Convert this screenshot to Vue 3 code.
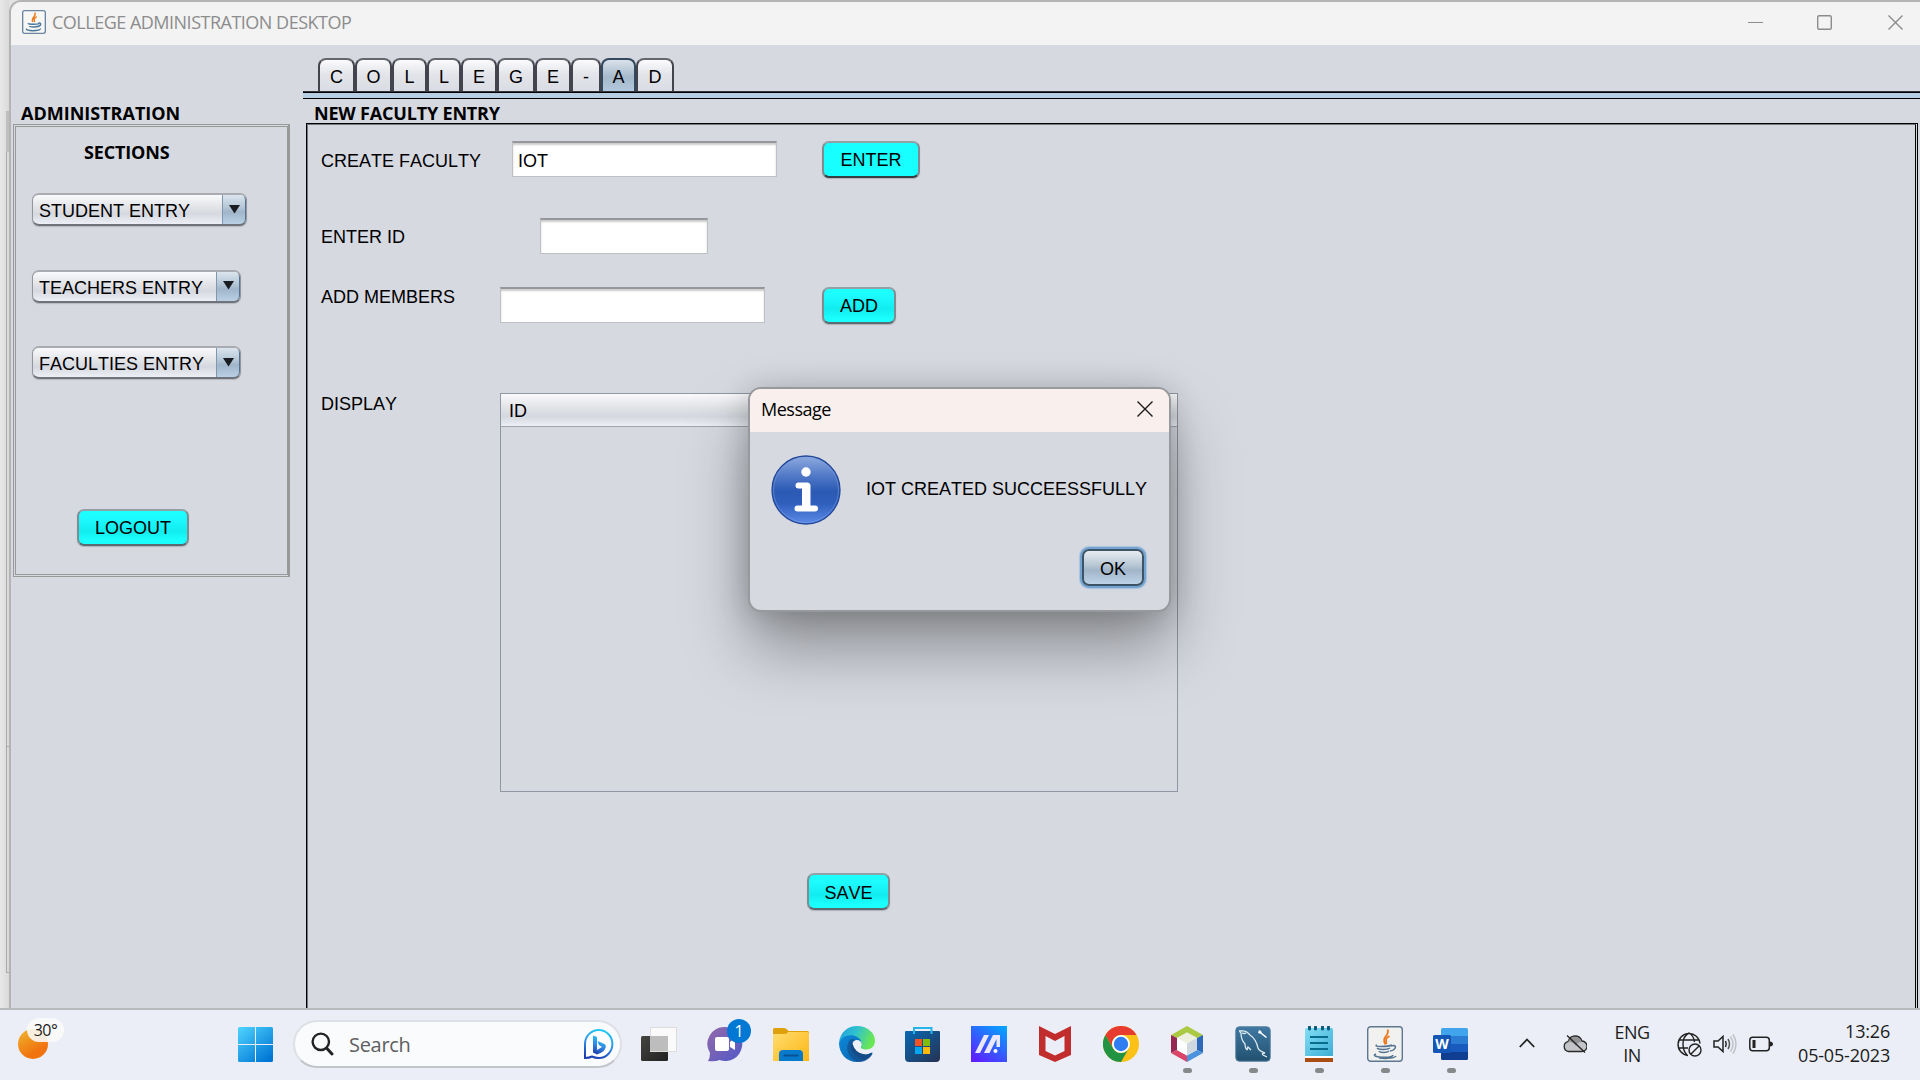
<script setup>
const tabs = [
  { text: 'C', w: 37 }, { text: 'O', w: 37 }, { text: 'L', w: 35 }, { text: 'L', w: 34 },
  { text: 'E', w: 36 }, { text: 'G', w: 38 }, { text: 'E', w: 36 }, { text: '-', w: 30 },
  { text: 'A', w: 35, on: true }, { text: 'D', w: 38 },
]
const combos = [
  { text: 'STUDENT ENTRY', w: 215 },
  { text: 'TEACHERS ENTRY', w: 209 },
  { text: 'FACULTIES ENTRY', w: 209 },
]
</script>

<template>
  <div class="screen">
    <div class="work">
      <div class="behind"><div class="b1"></div><div class="b2"></div><div class="b3"></div></div>
      <section class="window">
        <header class="titlebar">
          <svg class="java" viewBox="0 0 36 36"><rect x="1" y="1" width="34" height="34" rx="3" fill="#f7f7f6" stroke="#6a86a0" stroke-width="2" /><path d="M19 4c4 5-6 7-3 14M22 10c-5 3-4 5-3 8" fill="none" stroke="#ee7d1b" stroke-width="2.2" /><path d="M9 20c0 2 17 2 17-.5M24 20c6-2 5 4-1 5M11 24c1 2 11 2 13 0M7 28c-3 4 20 4 21 0" fill="none" stroke="#4b7798" stroke-width="2.2" /></svg>
          <span class="wintitle">COLLEGE ADMINISTRATION DESKTOP</span>
          <div class="controls">
            <svg width="156" height="18" viewBox="0 0 156 18" fill="none" stroke="#8b8b8b"><path d="M0 8.5h15" stroke-width="1.2" /><rect x="69.7" y="1.7" width="13.6" height="13.6" rx="1.5" stroke-width="1.4" /><path d="M140.500 1.500l14 14m0-14l-14 14" stroke-width="1.4" /></svg>
          </div>
        </header>
        <div class="content">
          <aside class="side">
            <h2 class="heading admin">ADMINISTRATION</h2>
            <div class="sections">
              <div class="inner">
                <h3 class="heading sec">SECTIONS</h3>
                <div v-for="c in combos" :key="c.text" class="combo" :style="{ width: c.w + 'px' }">
                  <span>{{ c.text }}</span>
                  <div class="arrow"><svg width="11" height="9" viewBox="0 0 11 9"><path d="M0 0h11L5.500 8.500z" fill="#191c20" /></svg></div>
                </div>
                <button class="btn logout">LOGOUT</button>
              </div>
            </div>
          </aside>
          <main class="main">
            <nav class="tabs">
              <div v-for="(t, i) in tabs" :key="i" class="tab" :class="{ on: t.on }" :style="{ width: t.w + 'px' }">{{ t.text }}</div>
            </nav>
            <div class="band"></div>
            <h2 class="heading entry">NEW FACULTY ENTRY</h2>
            <div class="form">
              <div class="formin">
                <div class="row r1"><label>CREATE FACULTY</label><div class="field">IOT</div><button class="btn enter">ENTER</button></div>
                <div class="row r2"><label>ENTER ID</label><div class="field short"></div></div>
                <div class="row r3"><label>ADD MEMBERS</label><div class="field"></div><button class="btn add">ADD</button></div>
                <div class="row r4"><label>DISPLAY</label><div class="table"><div class="thead">ID</div></div></div>
                <button class="btn save">SAVE</button>
              </div>
              <div class="rim"></div>
            </div>
          </main>
        </div>
      </section>
    </div>

    <footer class="taskbar">
      <div class="weather">
        <div class="sun"></div><div class="temp">30°</div>
      </div>
      <svg class="start" viewBox="0 0 35 35"><defs><linearGradient id="wl" gradientUnits="userSpaceOnUse" x1="0" y1="0" x2="28" y2="35"><stop offset="0" stop-color="#4fd5ff" /><stop offset="1" stop-color="#0076d4" /></linearGradient></defs><path fill="url(#wl)" d="M1.500 0H17v17H0V1.500Q0 0 1.500 0zM18 0h15.500Q35 0 35 1.500V17H18zM0 18h17v17H1.500Q0 35 0 33.500zM18 18h17v15.500q0 1.500-1.500 1.500H18z" /></svg>
      <div class="search">
        <svg width="23" height="24" viewBox="0 0 23 24" fill="none" stroke="#222"><circle cx="9.800" cy="9.800" r="8.200" stroke-width="2.400" /><path d="M15.500 16l5.500 6" stroke-width="3" stroke-linecap="round" /></svg>
        <span>Search</span>
        <svg class="bing" width="31" height="32" viewBox="0 0 31 32"><defs><linearGradient id="bg" x1="0.600" y1="0" x2="0.300" y2="1"><stop offset="0" stop-color="#22c9f2" /><stop offset=".5" stop-color="#318fe9" /><stop offset="1" stop-color="#1d3fae" /></linearGradient></defs><path d="M2 30V16A13.700 14 0 1 1 16 30Q12 30 9 28.500Q6 30 2 30z" fill="#fff" stroke="url(#bg)" stroke-width="2" /><path d="M10 7.500l4 1.500v13l5-3-3-2-1.500-4 7 3q2 1 1 4-1 3-4 4.500l-4.500 2-4-2z" fill="url(#bg)" /></svg>
      </div>
      <div class="apps">
        <div class="app"><svg viewBox="0 0 36 36"><defs><linearGradient id="tv" x1="0" y1="0" x2="1" y2="1"><stop offset="0" stop-color="#444441" /><stop offset="1" stop-color="#222" /></linearGradient></defs><rect y="10" width="27" height="25" rx="1.500" fill="url(#tv)" /><rect x="9.500" y="1.500" width="26" height="24" fill="#fafafa" stroke="#ddd" /><path d="M9 10h18v15H9z" fill="#bdbdbd" /></svg></div>
        <div class="app"><svg viewBox="0 0 36 36"><defs><linearGradient id="ch" x1="0" y1="0" x2="1" y2="1"><stop offset="0" stop-color="#9469a8" /><stop offset="1" stop-color="#5059c9" /></linearGradient></defs><path d="M18 1a17 17 0 1 1-5.500 33Q8 36 1 35q2-3 2-8A17 17 0 0 1 18 1z" fill="url(#ch)" /><rect x="8" y="11" width="14" height="14" rx="2" fill="#fff" /><path d="M23 16l5-4v12l-5-3z" fill="#fff" /></svg><b class="badge">1</b></div>
        <div class="app"><svg viewBox="0 0 36 36"><defs><linearGradient id="fo" x1="0" y1="0" x2="1" y2="1"><stop offset="0" stop-color="#ffdc70" /><stop offset="1" stop-color="#fdb713" /></linearGradient></defs><path d="M0 3.500Q0 2 1.500 2H11q2 0 3 1.500L15.500 5h19Q36 5 36 6.500V12H0z" fill="#dea00b" /><path d="M0 8h12q2 0 3-2h19.500Q36 6 36 7.500v27.500H0z" fill="url(#fo)" /><path d="M6 35v-7q0-4 4-4h16q4 0 4 4v7z" fill="#087acb" /><path d="M11.500 29.500h13" stroke="#085293" stroke-width="2.200" stroke-linecap="round" /></svg></div>
        <div class="app"><svg viewBox="0 0 36 36"><defs><linearGradient id="ed" x1="0" y1="0" x2="1" y2=".3"><stop offset="0" stop-color="#209cdd" /><stop offset=".5" stop-color="#2fc2d0" /><stop offset="1" stop-color="#69e655" /></linearGradient><linearGradient id="ee" x1="0" y1="0" x2="1" y2="1"><stop offset="0" stop-color="#0c8ada" /><stop offset="1" stop-color="#0b5da9" /></linearGradient></defs><path d="M0 17C1 6 9 0 18 0c11 0 18 7.500 18 14.500 0 6-4 9-9 9-3 0-6-1-5.500-3 2-2 1-5-1-6.500C15 8 3 9 0 17z" fill="url(#ed)" /><path d="M0 17C2 10 12 7 18 11c4 2 5 5 4 8-2-5-7-5-8 0-1 6 6 11 13 10 3-1 5-3 6.500-2.500C31 33 24 36 18 36 8 36 0 28 0 17z" fill="url(#ee)" /><path d="M12 13C5 19 8 33 20 36 28 36 32 31 33.500 27.500 33 26 30 29 26 29 19 29 13 25 14 19q.5-3 4-4.500-3-2-6-1.500z" fill="#164c89" opacity=".65" /><circle cx="18" cy="18.500" r="4.500" fill="#edf1f8" /><path d="M14 20q4 7 11 8.500L33 26 24 24q-3-1-2-4z" fill="#edf1f8" /><path d="M12 16q-2 12 12 17.500 7-1 9.500-6Q29 29 24 28q-8-2-10-9z" fill="#154c88" /></svg></div>
        <div class="app"><svg viewBox="0 0 36 36"><defs><linearGradient id="st" x1="0" y1="0" x2="1" y2="1"><stop offset="0" stop-color="#0869b4" /><stop offset="1" stop-color="#263252" /></linearGradient></defs><path d="M9 8V2h17.500v6" fill="none" stroke="#24b5eb" stroke-width="2" /><path d="M0 6q0-1 1-1h33q1 0 1 1v26q0 4-4 4H4q-4 0-4-4z" fill="url(#st)" /><path d="M9 5v3M26.500 8V5" fill="none" stroke="#24b5eb" stroke-width="2" /><path d="M10 13h7v7h-7z" fill="#f35325" /><path d="M18 13h7v7h-7z" fill="#81bc06" /><path d="M10 21h7v7h-7z" fill="#05a6f0" /><path d="M18 21h7v7h-7z" fill="#ffba08" /></svg></div>
        <div class="app"><svg viewBox="0 0 36 36"><defs><linearGradient id="as" x1="0.200" y1="1" x2=".9" y2="0"><stop offset="0" stop-color="#5d20ff" /><stop offset="1" stop-color="#04a4ff" /></linearGradient></defs><path d="M0 0h36v36H0z" fill="url(#as)" /><path d="M4 27L13 9h5L9 27zM13 27L22 9h7v12h-3.500v-8l-7 14z" fill="#e9e8ff" /><circle cx="24.500" cy="25" r="2" fill="#fff" /></svg></div>
        <div class="app"><svg viewBox="0 0 36 36"><path d="M2 0l16 8 16-8v29l-16 7-16-7zM8.500 10v15L18 29.500 27.500 25V10L18 15z" fill="#c12d2c" fill-rule="evenodd" /></svg></div>
        <div class="app"><svg viewBox="0 0 36 36"><circle cx="18" cy="18" r="18" fill="#fbc116" /><path d="M2.400 9A18 18 0 0 1 33.600 9H18a9 9 0 0 0-8.500 12z" fill="#e63b2e" /><path d="M2.400 9A18 18 0 0 0 18 36l7.800-13.500a9 9 0 0 1-15.600 0z" fill="#229342" /><circle cx="18" cy="18" r="9" fill="#fff" /><circle cx="18" cy="18" r="7.200" fill="#2f7df0" /></svg></div>
        <div class="app run"><svg viewBox="0 0 36 36"><path d="M18 0l16 9-6 3-10-5.500L8 12 2 9z" fill="#acc944" /><path d="M2 9l6 3v12l-6 3z" fill="#962953" /><path d="M2 27l6-3 10 5.500V36z" fill="#db4567" /><path d="M34 9l-6 3v12l6 3z" fill="#2e68b8" /><path d="M34 27l-6-3-10 5.500V36z" fill="#4b94dd" /><path d="M18 6.500L28 12l-10 5.500L8 12z" fill="#edf0dc" /><path d="M8 12l10 5.500v12L8 24z" fill="#fff" /><path d="M28 12l-10 5.500v12L28 24z" fill="#cdd8e0" /></svg></div>
        <div class="app run"><svg viewBox="0 0 36 36"><defs><linearGradient id="my" x1="0" y1="0" x2="0" y2="1"><stop offset="0" stop-color="#4078a2" /><stop offset="1" stop-color="#225170" /></linearGradient></defs><rect x=".8" y=".8" width="34.400" height="34.400" rx="3.500" fill="url(#my)" stroke="#517f9d" /><path d="M12 24q-2-2-2-6-4-4-4-11-3-3 0-2 5-1 9 4 6 4 8 13 1 3 7 5-4 0-2 2l4 2M12 24l1-3 3 3M7 7q3 1 4 0" fill="none" stroke="#dce9ef" stroke-width="1.300" /><path d="M24 4l2 1 1 2 5 4-1 1-5-4-3-1z" fill="#fff" /></svg></div>
        <div class="app run"><svg viewBox="0 0 36 36"><defs><linearGradient id="no" x1="0" y1="0" x2="1" y2="1"><stop offset="0" stop-color="#83dff5" /><stop offset="1" stop-color="#3daed5" /></linearGradient></defs><path d="M4 30h28v6H4z" fill="#a94d12" /><path d="M4 29h28v3H4z" fill="#fff" /><path d="M5.500 2h25Q32 2 32 3.500V30H4V3.500Q4 2 5.500 2z" fill="url(#no)" /><path d="M8.500 1v2M14.500 1v2M21.500 1v2M27.500 1v2" stroke="#0a5a7c" stroke-width="3" stroke-linecap="round" /><path d="M9 11h18M9 17h18M9 23h18" stroke="#086c8d" stroke-width="2" /></svg></div>
        <div class="app run"><svg viewBox="0 0 36 36"><rect x=".7" y=".7" width="34.600" height="34.600" rx="3" fill="#f1f1f0" stroke="#5d7890" stroke-width="1.400" /><path d="M20.500 3.500c3 6-7 7-2 15M22.500 10c-6 3-2 5-3.500 8" fill="none" stroke="#e9791d" stroke-width="1.800" /><path d="M10 19c-5 2 11 2 15 0M24 20c7-2 5 4-1 5M10 22c2 2 10 2 13 0M12 25c1 2 8 2 10 0M9 28c-8 3 16 5 17 1M12 32c8 1 16 0 17-2" fill="none" stroke="#527490" stroke-width="1.500" /></svg></div>
        <div class="app run"><svg viewBox="0 0 36 36"><path d="M9.500 2h24Q35 2 35 3.500V11H8V3.500Q8 2 9.500 2z" fill="#41a5ee" /><path d="M8 10h27v8H8z" fill="#2b7cd3" /><path d="M8 18h27v8H8z" fill="#185abd" /><path d="M8 26h27v6.500q0 1.500-1.500 1.500h-24Q8 34 8 32.500z" fill="#103f91" /><rect y="9" width="18" height="18" rx="1.500" fill="#1456b5" /><text x="9" y="23" text-anchor="middle" class="w">W</text></svg></div>
      </div>
      <div class="tray">
        <svg class="chev" width="16" height="10" viewBox="0 0 16 10" fill="none" stroke="#222" stroke-width="1.800"><path d="M.8 9L8 1.500 15.200 9" /></svg>
        <svg class="cloud" width="24" height="20" viewBox="0 0 24 20"><path d="M5.500 17.500a5 5 0 0 1-.5-9.800Q7 2 12 2q5 0 7 5a5.200 5.200 0 0 1-.5 10.500z" fill="#c2c4c7" stroke="#292929" stroke-width="1.300" /><path d="M5 8Q7 3 12 3q4 0 6.500 5-4 0-5.500 4-4-5-8-4z" fill="#929294" /><path d="M4 1.500l18 17" stroke="#222" stroke-width="1.300" /></svg>
        <div class="lang"><span>ENG</span><span>IN</span></div>
        <svg class="globe" width="25" height="25" viewBox="0 0 25 25" fill="none" stroke="#222" stroke-width="1.400"><path d="M11 23.500A11 11 0 1 1 23 11.500M12 1q-6 3-6 11 0 7 4 11M12 1q5 3 5.500 9M2 8h20M2 16h9" /><circle cx="18" cy="18" r="6" fill="#ebeef7" /><path d="M14 22l8-8" /></svg>
        <svg class="vol" width="25" height="20" viewBox="0 0 25 20" fill="none" stroke="#222" stroke-width="1.500"><path d="M1 7v6h4l5 4.500v-15L5 7zM12.500 7q1.500 3 0 6" /><path d="M15 5q3 5 0 10" stroke="#555" /><path d="M17.500 2.500q5 7.500 0 15M20 .5q6 9.500 0 19" stroke="#bfc1c8" /></svg>
        <svg class="batt" width="24" height="16" viewBox="0 0 24 16"><rect x=".8" y="1.300" width="19.500" height="13.400" rx="3" fill="none" stroke="#222" stroke-width="1.500" /><path d="M3.500 4h3v8h-3zM21 5.500q3 .5 3 2.500t-3 2.500z" fill="#222" /></svg>
        <div class="clock"><span>13:26</span><span>05-05-2023</span></div>
      </div>
    </footer>

    <div class="dialog">
      <div class="dhead"><span>Message</span><svg width="16" height="16" viewBox="0 0 16 16" stroke="#1a1a1a" stroke-width="1.400"><path d="M.5.500l15 15m0-15l-15 15" /></svg></div>
      <div class="dbody">
        <svg class="info" width="70" height="70" viewBox="0 0 70 70"><defs><linearGradient id="in" x1="0" y1="0" x2="0" y2="1"><stop offset="0" stop-color="#8fabdf" /><stop offset=".3" stop-color="#4f78c6" /><stop offset=".52" stop-color="#2b5ab4" /><stop offset=".7" stop-color="#2f5fbc" /><stop offset="1" stop-color="#5c8ae8" /></linearGradient></defs><circle cx="35" cy="35" r="34" fill="url(#in)" stroke="#24499a" stroke-width="1.300" /><circle cx="35" cy="35" r="32.500" fill="none" stroke="#7fa1e4" stroke-opacity=".5" /><circle cx="35" cy="17" r="4.700" fill="#fff" /><path d="M27.500 27.500H36q3.500 0 3.500 3.500v19.500H44a3 3 0 0 1 0 6H26.500a3 3 0 0 1 0-6h4.500V33.500h-3.500a3 3 0 0 1 0-6z" fill="#fff" /></svg>
        <p>IOT CREATED SUCCEESSFULLY</p>
      </div>
      <div class="dfoot"><button class="ok">OK</button></div>
    </div>
  </div>
</template>

<style>
body { margin: 0; overflow: hidden; }
</style>

<style scoped>
* { box-sizing: border-box; }
.screen { position: relative; width: 1920px; height: 1080px; display: flex; flex-direction: column; overflow: hidden; font: 18px/20px "Liberation Sans", Arial, sans-serif; font-kerning: none; color: #000; background: #d6d9e0; }
.work { display: flex; height: 1010px; border-bottom: 2px solid #b9babd; background: #e3e3e3; }
.behind { width: 9px; padding-left: 6px; background: linear-gradient(90deg, #e8e8e8, #dadada); display: flex; flex-direction: column; }
.b1 { height: 41px; margin-top: 111px; background: #bfbfbf; }
.b2 { height: 595px; border-left: 1px solid #aaa; border-bottom: 1px solid #aaa; }
.b3 { height: 226px; border-left: 1px solid #aaa; border-bottom: 1px solid #aaa; }
.window { flex: 1; border: solid #b4b4b4; border-width: 2px 0 0 2px; border-radius: 12px 0 0 0; overflow: hidden; background: #d6d9e0; display: flex; flex-direction: column; }
.titlebar { height: 43px; background: #f3f3f3; display: flex; align-items: center; padding-left: 11px; flex: none; }
.java { width: 24px; height: 24px; margin-top: -4px; }
.wintitle { font: 18px/24px "Open Sans", "Noto Sans", sans-serif; letter-spacing: -0.5px; color: #8c8c8c; margin: -4px 0 0 6px; white-space: nowrap; }
.controls { margin: -2px 16px 0 auto; height: 18px; }
.controls svg { display: block; }
.content { display: flex; flex: 1; }
.side { width: 292px; padding: 58px 0 0 2px; }
.heading { margin: 0; font: bold 18px/20px "Open Sans", "Noto Sans", sans-serif; white-space: nowrap; }
.admin { padding-left: 8px; height: 21px; letter-spacing: 0; }
.sections { width: 277px; height: 453px; border: 1px solid #999; border-right-width: 2px; padding: 1px 0 1px 1px; }
.inner { height: 100%; border: 1px solid #999; display: flex; flex-direction: column; align-items: flex-start; padding: 15px 0 0 16px; }
.sec { margin-left: 52px; height: 20px; letter-spacing: -0.15px; margin-bottom: 31px; }
.combo { height: 33px; margin-bottom: 43.500px; display: flex; justify-content: space-between; border: 1px solid #92959b; border-top: 2px solid #a9abb0; border-bottom: 2px solid #6f7278; border-radius: 7px; background: linear-gradient(#fafafc, #e0e2e6 45%, #d5d8df 65%, #eceff5); box-shadow: 0 1px 1px #b5b8c0; overflow: hidden; white-space: nowrap; }
.combo span { padding-left: 6px; line-height: 33px; }
.arrow { width: 25px; margin: -2px -1px -2px 0; border: 1px solid #57728c; border-bottom: 2px solid #3e566d; border-right-width: 2px; border-left-color: #7f98b0; border-radius: 0 7px 7px 0; background: linear-gradient(#dde7ef, #b4c6d6 45%, #a0b5ca 60%, #bad0e5); display: flex; justify-content: center; align-items: center; }
.btn { font: 18px/20px "Liberation Sans", Arial, sans-serif; font-kerning: none; color: #000; padding: 1px 0 0; border: 2px solid #7f8d92; border-top-color: #91a2a7; border-bottom-color: #5c6a72; border-radius: 7px; background: linear-gradient(#1effff, #1cfaff 25%, #11ecee 60%, #1cffff 90%); box-shadow: 0 1px 1px #aeb1b8; height: 37px; flex: none; }
.logout { width: 112px; margin: 86px 0 0 45px; }
.main { flex: 1; display: flex; flex-direction: column; padding-top: 13px; }
.tabs { display: flex; height: 34px; padding-left: 15px; border-bottom: 1px solid #33333f; }
.tab { flex: none; height: 33px; border: 2px solid #44444e; border-top-color: #66666e; border-bottom: 0; border-radius: 8px 8px 0 0; background: linear-gradient(#fbfbfd, #e3e5ea 45%, #d9dce2); text-align: center; line-height: 34px; }
.tab.on { border-color: #34495e; background: linear-gradient(#d9e2ea, #a6b9cb 55%, #b2c8dc); }
.band { height: 7px; border-top: 1px solid #000; border-bottom: 1px solid #000; background: #b7cde1; }
.entry { padding: 4px 0 0 11px; height: 24px; letter-spacing: -0.18px; }
.form { flex: 1; display: flex; margin-left: 3px; margin-right: 2px; border-left: 1px solid #000; border-top: 1px solid #000; border-right: 1px solid #000; }
.formin { flex: 1; border: solid #77797f; border-width: 1px 1px 0 1px; border-right-color: #000; padding: 16px 0 0 13px; }
.rim { width: 1px; background: #d6d9e0; }
.row { display: flex; align-items: flex-start; height: 36px; }
.row label { white-space: nowrap; }
.r1 label { width: 191px; padding-top: 10px; }
.r2 { margin-top: 41px; }
.r2 label { width: 219px; padding-top: 9px; }
.r3 { margin-top: 33px; }
.r3 label { width: 179px; }
.r4 { margin-top: 70px; height: 399px; }
.r4 label { width: 179px; padding-top: 1px; }
.field { width: 265px; height: 36px; background: #fff; border: 1px solid #c0c1c4; border-top: 2px solid #95979c; box-shadow: inset 0 2px 2px #ccc; padding: 8px 5px 0; }
.short { width: 168px; }
.enter { width: 98px; margin-left: 45px; background: #18ffff; border-bottom-color: #333f45; }
.add { width: 74px; margin-left: 57px; }
.table { width: 678px; height: 399px; border: 1px solid #9096a2; }
.thead { height: 33px; border-bottom: 1px solid #a0a4ad; background: linear-gradient(#fafafc, #e0e2e6 45%, #d5d8df 70%, #eceff5); padding: 7px 0 0 8px; }
.save { display: block; width: 83px; margin: 81px 0 0 486px; padding-top: 2px; }
.dialog { position: absolute; left: 748px; top: 387px; width: 423px; height: 225px; border: 2px solid #98999c; border-radius: 13px; background: #d6d9e0; background-clip: padding-box; overflow: hidden; box-shadow: 0 36px 64px rgba(0, 0, 0, .35), 0 2px 30px rgba(0, 0, 0, .18); display: flex; flex-direction: column; }
.dhead { height: 43px; background: #f9f0ee; display: flex; align-items: center; justify-content: space-between; padding: 0 16px 3px 11px; font: 18px/20px "Open Sans", "Noto Sans", sans-serif; letter-spacing: -0.5px; }
.dbody { display: flex; align-items: flex-start; padding: 23px 0 0 21px; height: 114px; }
.dbody p { margin: 24px 0 0 25px; white-space: nowrap; }
.dfoot { display: flex; justify-content: flex-end; padding-right: 25px; }
.ok { width: 62px; height: 37px; margin-top: 3px; font: 18px/20px "Liberation Sans", Arial, sans-serif; color: #000; padding: 2px 0 0; border: 2px solid #3d5366; border-radius: 7px; background: linear-gradient(#e7edf2, #b9c8d5 42%, #a1b5c9 58%, #bdd3e8); box-shadow: 0 0 0 2px #73a4d1, 0 0 1px 3px #a9c4de; }
.taskbar { flex: 1; display: flex; align-items: flex-start; background: #ebeef6; color: #1c1c1c; }
.weather { position: relative; width: 238px; height: 70px; }
.sun { position: absolute; left: 18px; top: 19px; width: 30px; height: 30px; border-radius: 50%; background: linear-gradient(150deg, #eeb72b, #f17310 70%); }
.temp { position: absolute; left: 27px; top: 8px; width: 37px; height: 24px; border-radius: 12px; background: rgba(250, 250, 250, .88); font: 16px/24px "Open Sans", sans-serif; letter-spacing: -0.5px; text-align: center; }
.start { width: 35px; height: 35px; margin: 17px 20px 0 0; flex: none; }
.search { width: 329px; height: 48px; margin-top: 10px; border: 2px solid #dfe0e7; border-bottom-color: #c3c5cb; border-radius: 24px; background: #fafbfd; display: flex; align-items: center; padding: 0 6px 0 16px; flex: none; }
.search span { font: 20px/26px "Open Sans", "Noto Sans", sans-serif; letter-spacing: -0.3px; color: #5e5e5e; margin: 1px auto 0 15px; }
.apps { display: flex; margin-left: 4px; padding-top: 16px; }
.app { width: 66px; height: 50px; display: flex; flex-direction: column; align-items: center; position: relative; }
.app > svg { width: 36px; height: 36px; flex: none; }
.run::after { content: ""; width: 9px; height: 5px; margin-top: 6px; border-radius: 3px; background: #878889; }
.badge { position: absolute; left: 35px; top: -7px; width: 24px; height: 24px; border-radius: 50%; background: #0078d4; color: #fff; font: 16px/24px "Open Sans", sans-serif; text-align: center; }
.w { font: bold 14px "Open Sans", sans-serif; fill: #fff; }
.tray { display: flex; margin-left: 35px; font: 18px/24px "Open Sans", "Noto Sans", sans-serif; letter-spacing: -0.6px; }
.tray svg { flex: none; }
.chev { margin: 28px 28px 0 0; }
.cloud { margin: 24px 0 0; }
.lang { width: 90px; display: flex; flex-direction: column; align-items: center; padding-top: 11px; line-height: 23px; }
.globe { margin: 22px 11px 0 0; }
.vol { margin: 24px 11px 0 0; }
.batt { margin: 26px 0 0; }
.clock { width: 117px; display: flex; flex-direction: column; align-items: flex-end; padding-top: 9px; letter-spacing: -0.2px; }
</style>
